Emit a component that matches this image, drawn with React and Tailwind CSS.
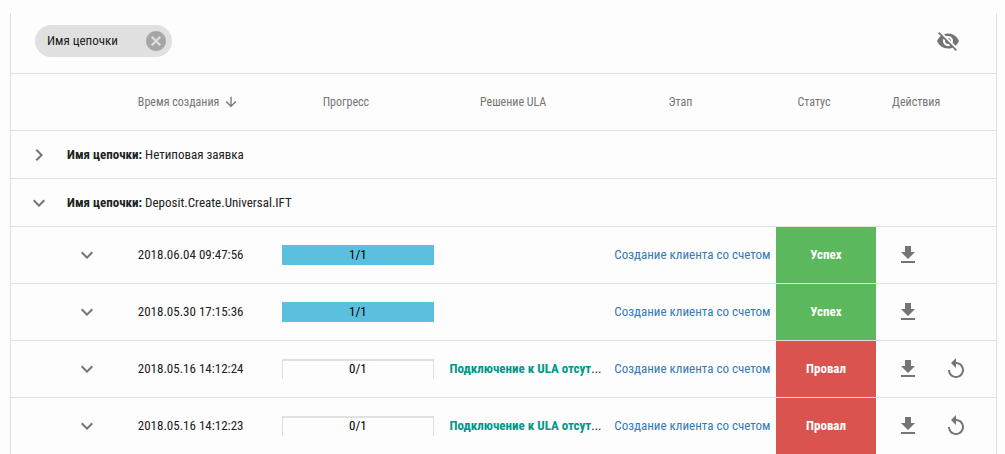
import {
  MdArrowDownward,
  MdCancel,
  MdChevronRight,
  MdExpandMore,
  MdFileDownload,
  MdReplay,
  MdVisibilityOff,
} from 'react-icons/md';

const rows = [
  { time: '2018.06.04 09:47:56', done: 1, total: 1, ula: '', stage: 'Создание клиента со счетом', ok: true },
  { time: '2018.05.30 17:15:36', done: 1, total: 1, ula: '', stage: 'Создание клиента со счетом', ok: true },
  { time: '2018.05.16 14:12:24', done: 0, total: 1, ula: 'Подключение к ULA отсут', stage: 'Создание клиента со счетом', ok: false },
  { time: '2018.05.16 14:12:23', done: 0, total: 1, ula: 'Подключение к ULA отсут', stage: 'Создание клиента со счетом', ok: false },
];

function IconButton({ label, children }) {
  return (
    <button type="button" aria-label={label} className="flex size-6 shrink-0 items-center justify-center text-[#757575]">
      {children}
    </button>
  );
}

function HeaderCell({ title, sorted = false, align = 'center' }) {
  return (
    <th
      scope="col"
      aria-sort={sorted ? 'descending' : undefined}
      className="h-14 border-b border-[#e0e0e0] px-4 py-0 text-xs font-normal text-[#757575]"
    >
      <button
        type="button"
        className={
          align === 'left'
            ? 'flex w-full items-center justify-start gap-1 whitespace-nowrap'
            : 'flex w-full items-center justify-center gap-1 whitespace-nowrap'
        }
      >
        {title}
        <MdArrowDownward aria-hidden="true" className={sorted ? 'mr-1 size-4' : 'invisible mr-1 size-4'} />
      </button>
    </th>
  );
}

function GroupRow({ name, open }) {
  return (
    <tr className="h-12">
      <td className="border-b border-[#e0e0e0] p-0">
        <div className="flex justify-center">
          <IconButton label={open ? 'Свернуть' : 'Развернуть'}>
            {open ? <MdExpandMore className="size-6" /> : <MdChevronRight className="size-6" />}
          </IconButton>
        </div>
      </td>
      <td colSpan={7} className="border-b border-[#e0e0e0] p-0">
        <b className="font-bold">Имя цепочки:</b> {name}
      </td>
    </tr>
  );
}

function Progress({ done, total }) {
  const full = done === total;
  return (
    <div
      role="progressbar"
      aria-label="Прогресс"
      aria-valuenow={done}
      aria-valuemax={total}
      className={
        full
          ? 'h-5 bg-[#5bc0de] text-center leading-5 text-black'
          : 'h-5 border-x border-t-2 border-[#e0e0e0] text-center leading-4 text-black'
      }
    >
      {done}/{total}
    </div>
  );
}

function ChainRow({ row }) {
  return (
    <tr className="group h-[57px] last:h-14">
      <td className="border-b border-[#e0e0e0] p-0 group-last:border-b-0" />
      <td className="border-b border-[#e0e0e0] p-0 group-last:border-b-0">
        <div className="flex justify-center">
          <IconButton label="Подробнее">
            <MdExpandMore className="size-6" />
          </IconButton>
        </div>
      </td>
      <td className="border-b border-[#e0e0e0] p-0 text-center whitespace-nowrap group-last:border-b-0">{row.time}</td>
      <td className="border-b border-[#e0e0e0] px-2 py-0 group-last:border-b-0">
        <Progress done={row.done} total={row.total} />
      </td>
      <td className="border-b border-[#e0e0e0] px-2 py-0 whitespace-nowrap group-last:border-b-0">
        {row.ula && (
          <>
            <b className="font-bold text-[#009688]">{row.ula}</b>...
          </>
        )}
      </td>
      <td className="border-b border-[#e0e0e0] p-0 text-center whitespace-nowrap group-last:border-b-0">
        <a href="#stage" className="text-[#337ab7]">{row.stage}</a>
      </td>
      <td
        className={
          row.ok
            ? 'border-b border-[#e0e0e0] bg-[#5cb85c] p-0 text-center font-bold text-white group-last:border-b-0'
            : 'border-b border-[#e0e0e0] bg-[#d9534f] p-0 text-center font-bold text-white group-last:border-b-0'
        }
      >
        {row.ok ? 'Успех' : 'Провал'}
      </td>
      <td className="border-b border-[#e0e0e0] px-5 py-0 group-last:border-b-0">
        <div className="flex gap-6">
          <IconButton label="Скачать">
            <MdFileDownload className="size-6" />
          </IconButton>
          {!row.ok && (
            <IconButton label="Повторить">
              <MdReplay className="size-6" />
            </IconButton>
          )}
        </div>
      </td>
    </tr>
  );
}

export default function App() {
  return (
    <main className="min-h-screen bg-[#fdfdfd] pt-[13px] pr-2 pl-2.5 font-['Roboto_Condensed','Roboto',sans-serif] text-[13px] leading-5 text-[#212121]">
      <section className="border-x border-[#e0e0e0]">
        <div className="flex items-start justify-between border-b border-[#e0e0e0] pt-3 pr-9 pb-4 pl-6">
          <div className="flex h-8 items-center gap-[26px] rounded-full bg-[#e0e0e0] pr-1 pl-3">
            <span>Имя цепочки</span>
            <button type="button" aria-label="Удалить группировку" className="text-[#a6a6a6]">
              <MdCancel className="size-6" />
            </button>
          </div>
          <div className="flex h-8 items-center">
            <IconButton label="Выбор колонок">
              <MdVisibilityOff className="size-6" />
            </IconButton>
          </div>
        </div>
        <table className="w-full table-fixed border-separate border-spacing-0">
          <colgroup>
            <col className="w-14" />
            <col className="w-10" />
            <col />
            <col />
            <col />
            <col />
            <col className="w-[100px]" />
            <col className="w-[120px]" />
          </colgroup>
          <thead>
            <tr className="h-[57px]">
              <td className="border-b border-[#e0e0e0] p-0" />
              <td className="border-b border-[#e0e0e0] p-0" />
              <HeaderCell title="Время создания" sorted />
              <HeaderCell title="Прогресс" />
              <HeaderCell title="Решение ULA" />
              <HeaderCell title="Этап" />
              <HeaderCell title="Статус" />
              <HeaderCell title="Действия" align="left" />
            </tr>
          </thead>
          <tbody>
            <GroupRow name="Нетиповая заявка" open={false} />
            <GroupRow name="Deposit.Create.Universal.IFT" open />
            {rows.map((row) => (
              <ChainRow key={row.time} row={row} />
            ))}
          </tbody>
        </table>
      </section>
    </main>
  );
}
